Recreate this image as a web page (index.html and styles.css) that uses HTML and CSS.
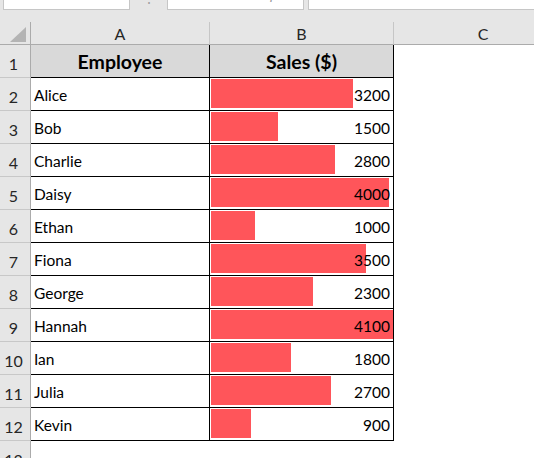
FILE: index.html
```html
<!DOCTYPE html>
<html>
<head>
<meta charset="utf-8">
<link rel="stylesheet" href="styles.css">
</head>
<body>
<div class="app">
  <div class="fbar">
    <div class="namebox">B15</div>
    <div class="dots">⋮</div>
    <div class="fxbox"><span class="x">✕</span><span class="ok">✓</span><span class="fx">fx</span></div>
    <div class="formula"></div>
  </div>
  <div class="sheet">
    <div class="corner"><svg width="16" height="15" viewBox="0 0 16 15"><polygon points="16,0 16,15 0,15" fill="#b4b4b4"/></svg></div>
    <div class="colhdr">A</div>
    <div class="colhdr">B</div>
    <div class="colhdr last">C</div>

    <div class="rowhdr">1</div><div class="cell name head">Employee</div><div class="cell sales head">Sales ($)</div><div class="cell blank"></div>

    <div class="rowhdr">2</div><div class="cell name">Alice</div><div class="cell sales"><div class="bar" style="width:142px"></div><div class="val">3200</div></div><div class="cell blank"></div>
    <div class="rowhdr">3</div><div class="cell name">Bob</div><div class="cell sales"><div class="bar" style="width:66.6px"></div><div class="val">1500</div></div><div class="cell blank"></div>
    <div class="rowhdr">4</div><div class="cell name">Charlie</div><div class="cell sales"><div class="bar" style="width:124.3px"></div><div class="val">2800</div></div><div class="cell blank"></div>
    <div class="rowhdr">5</div><div class="cell name">Daisy</div><div class="cell sales"><div class="bar" style="width:177.6px"></div><div class="val">4000</div></div><div class="cell blank"></div>
    <div class="rowhdr">6</div><div class="cell name">Ethan</div><div class="cell sales"><div class="bar" style="width:44.4px"></div><div class="val">1000</div></div><div class="cell blank"></div>
    <div class="rowhdr">7</div><div class="cell name">Fiona</div><div class="cell sales"><div class="bar" style="width:155.4px"></div><div class="val">3500</div></div><div class="cell blank"></div>
    <div class="rowhdr">8</div><div class="cell name">George</div><div class="cell sales"><div class="bar" style="width:102.1px"></div><div class="val">2300</div></div><div class="cell blank"></div>
    <div class="rowhdr">9</div><div class="cell name">Hannah</div><div class="cell sales"><div class="bar" style="width:182px"></div><div class="val">4100</div></div><div class="cell blank"></div>
    <div class="rowhdr">10</div><div class="cell name">Ian</div><div class="cell sales"><div class="bar" style="width:79.9px"></div><div class="val">1800</div></div><div class="cell blank"></div>
    <div class="rowhdr">11</div><div class="cell name">Julia</div><div class="cell sales"><div class="bar" style="width:119.9px"></div><div class="val">2700</div></div><div class="cell blank"></div>
    <div class="rowhdr">12</div><div class="cell name">Kevin</div><div class="cell sales"><div class="bar" style="width:40px"></div><div class="val">900</div></div><div class="cell blank"></div>

    <div class="rowhdr">13</div><div class="cell empty"></div><div class="cell empty"></div><div class="cell empty"></div>
  </div>
</div>
</body>
</html>
```

FILE: styles.css
```css
* { box-sizing: border-box; }
html, body {
  margin: 0;
  padding: 0;
  width: 534px;
  height: 458px;
  overflow: hidden;
  background: #ffffff;
}
.app {
  font-family: Lato, "Liberation Sans", sans-serif;
  color: #000;
  width: 534px;
  overflow: hidden;
}
.fbar {
  height: 22px;
  background: #e6e6e6;
  display: flex;
  align-items: flex-start;
  overflow: hidden;
}
.namebox, .fxbox, .formula {
  height: 24px;
  margin-top: -14px;
  background: #fff;
  border: 1px solid #c6c6c6;
}
.namebox {
  margin-left: 3px;
  width: 127px;
  font-size: 15px;
  line-height: 14px;
  padding-left: 6px;
  color: #333;
}
.dots {
  width: 37px;
  text-align: center;
  color: #a0a0a0;
  font-size: 14px;
  line-height: 8px;
  margin-top: -6px;
}
.fxbox {
  width: 137px;
  display: flex;
  color: #bdbdbd;
  font-size: 15px;
  line-height: 14px;
}
.fxbox .x { margin-left: 10px; }
.fxbox .ok { margin-left: 36px; }
.fxbox .fx { margin-left: 30px; font-style: italic; font-family: "Liberation Serif", serif; color: #9a9a9a; }
.formula {
  flex: 1;
  margin-left: 4px;
  border-right: none;
}
.sheet {
  display: grid;
  grid-template-columns: 31px 179px 184px 179px;
  grid-template-rows: 23px repeat(13, 33px);
  width: 573px;
}
.corner {
  background: #e6e6e6;
  border-right: 1px solid #ababab;
  border-bottom: 1px solid #ababab;
  display: flex;
  align-items: flex-end;
  justify-content: flex-end;
  padding: 0 4px 2px 0;
}
.corner svg { display: block; }
.colhdr {
  background: #e6e6e6;
  border-right: 1px solid #c6c6c6;
  border-bottom: 1px solid #ababab;
  display: flex;
  align-items: center;
  justify-content: center;
  font-size: 16px;
  color: #262626;
  padding-top: 1px;
}
.rowhdr {
  background: #e6e6e6;
  border-right: 1px solid #ababab;
  border-bottom: 1px solid #c8c8c8;
  display: flex;
  align-items: flex-end;
  justify-content: center;
  font-size: 16px;
  color: #262626;
  padding-bottom: 4px;
  padding-right: 3px;
}
.cell {
  border-right: 1px solid #000;
  border-bottom: 1px solid #000;
  font-size: 15.5px;
  background: #fff;
}
.cell.name {
  display: flex;
  align-items: flex-end;
  padding: 0 0 7px 3px;
  line-height: 1;
}
.cell.head {
  background: #d9d9d9;
  font-weight: 700;
  font-size: 19.5px;
  justify-content: center;
  align-items: center;
  display: flex;
  padding: 1px 0 0 0;
}
.cell.sales {
  display: grid;
}
.bar, .val { grid-area: 1 / 1; }
.bar {
  background: #ff555a;
  height: 29px;
  margin: 1px 0 0 1px;
  justify-self: start;
  align-self: start;
}
.val {
  justify-self: end;
  align-self: end;
  padding: 0 3px 7px 0;
  line-height: 1;
}
.cell.blank, .cell.empty {
  border: none;
}
```
